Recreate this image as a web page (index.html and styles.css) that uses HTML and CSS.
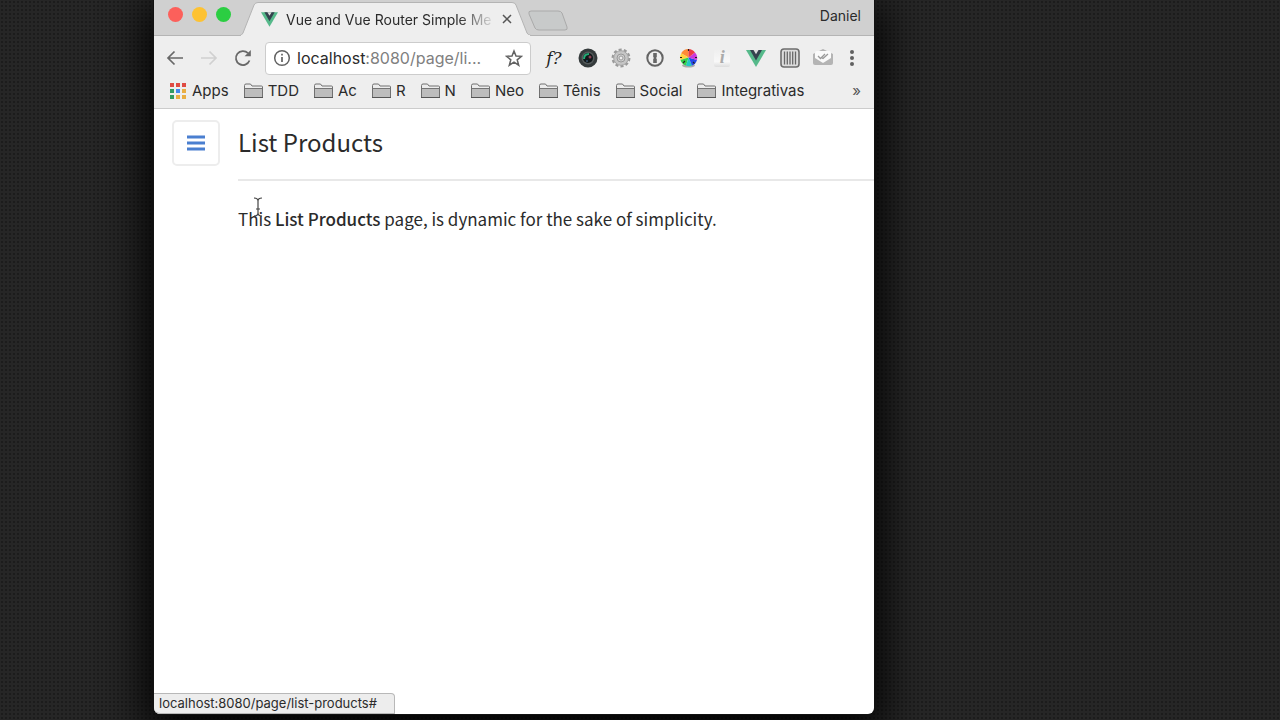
FILE: index.html
```html
<!DOCTYPE html>
<html lang="en">
<head>
<meta charset="utf-8">
<title>Vue and Vue Router Simple Menu</title>
<link rel="stylesheet" href="styles.css">
</head>
<body>
<svg class="defs" aria-hidden="true">
  <symbol id="vue" viewBox="0 0 20 17"><path d="M0 0h20L10 17z" fill="#55b98a"/><path d="M4 0h12l-6 10.500z" fill="#35424e"/><path d="M7.500 0h5L10 4.200z" fill="#dedede"/></symbol>
  <symbol id="folder" viewBox="0 0 19 16"><path d="M.5 14.500V2.500Q.5 1 2 1h4.500L8 3h9.500q1 0 1 1v10.500z" fill="#ececec" stroke="#707070"/><path d="M1 6h17v8.500H1z" fill="#bdbdbd"/><path d="M.5 5.500h18" stroke="#757575"/><path d="M0 14.500h19" stroke="#555"/></symbol>
</svg>
<div class="window">
  <header class="tabstrip">
    <div class="lights">
      <button class="light red" aria-label="Close"></button>
      <button class="light yellow" aria-label="Minimize"></button>
      <button class="light green" aria-label="Zoom"></button>
    </div>
    <div class="tab">
      <svg class="tab-shape" viewBox="0 0 291 34" preserveAspectRatio="none" aria-hidden="true"><path d="M0 33.500Q2 33 3 31L14 3Q15 .5 18 .5H272Q275 .5 276 3L287 31Q288 33 291 33.500V34H0z" fill="#eeeeee" stroke="#b4b4b4"/><path d="M1 33.500h289" stroke="#eee"/></svg>
      <svg class="favicon"><use href="#vue"/></svg>
      <span class="tab-title">Vue and Vue Router Simple Me</span>
      <button class="tab-close" aria-label="Close tab"><svg width="10" height="10" viewBox="0 0 10 10"><path d="M1 1l8 8M9 1L1 9" stroke="#555" stroke-width="1.500"/></svg></button>
    </div>
    <button class="new-tab" aria-label="New tab"><svg width="40" height="21" viewBox="0 0 40 21"><path d="M3 1h27q3 0 4 2l5 14q1 3-2 3H11q-3 0-4-2L1 4Q0 1 3 1z" fill="#c8caca" stroke="#aaa"/></svg></button>
    <span class="user">Daniel</span>
  </header>
  <div class="toolbar">
    <button class="nav" aria-label="Back"><svg width="18" height="16" viewBox="0 0 18 16"><path d="M17 8H2M8.500 1.500L2 8l6.500 6.500" fill="none" stroke="#686868" stroke-width="1.700"/></svg></button>
    <button class="nav" aria-label="Forward"><svg width="18" height="16" viewBox="0 0 18 16"><path d="M1 8h15M9.500 1.500L16 8l-6.500 6.500" fill="none" stroke="#d0d0d0" stroke-width="1.700"/></svg></button>
    <button class="nav" aria-label="Reload"><svg width="18" height="18" viewBox="0 0 18 18"><path d="M15.500 11.500A7 7 0 1 1 14 4.200" fill="none" stroke="#686868" stroke-width="1.800"/><path d="M16.800 1v6.200h-6.200z" fill="#686868"/></svg></button>
    <div class="address">
      <svg width="18" height="18" viewBox="0 0 18 18"><circle cx="9" cy="9" r="7.300" fill="none" stroke="#626262" stroke-width="1.500"/><path d="M9 8v5M9 4.800v1.700" stroke="#626262" stroke-width="1.700"/></svg>
      <span class="url">localhost<span class="path">:8080/page/li...</span></span>
      <button class="star" aria-label="Bookmark"><svg width="18" height="18" viewBox="0 0 18 18"><path d="M9 2l2 5 5.500.3-4.300 3.500 1.500 5.400L9 13.200l-4.700 3 1.500-5.400L1.500 7.300 7 7z" fill="none" stroke="#626262" stroke-width="1.500"/></svg></button>
    </div>
    <div class="extensions">
      <button class="ext script">f?</button>
      <button class="ext" aria-label="Camera"><svg width="20" height="20" viewBox="0 0 20 20"><circle cx="10" cy="10" r="9.500" fill="#343a3b"/><circle cx="10" cy="10" r="6.500" fill="#555b5c"/><circle cx="10" cy="10" r="5" fill="#101719"/><path d="M6 11q0-5 5-5" fill="none" stroke="#24aa75" stroke-width="2"/><circle cx="12" cy="9" r="1.500" fill="#8b4053"/><circle cx="9" cy="13" r="1" fill="#37536d"/></svg></button>
      <button class="ext" aria-label="Settings"><svg width="20" height="20" viewBox="0 0 20 20"><circle cx="10" cy="10" r="8.200" fill="none" stroke="#9a9a9a" stroke-width="2.500" stroke-dasharray="3 2.150"/><circle cx="10" cy="10" r="7.300" fill="#c6c6c6" stroke="#a5a5a5"/><circle cx="10" cy="10" r="4" fill="#d0d0d0" stroke="#999"/><circle cx="10" cy="10" r="2" fill="#eee" stroke="#999"/></svg></button>
      <button class="ext" aria-label="Passwords"><svg width="18" height="18" viewBox="0 0 18 18"><circle cx="9" cy="9" r="7.700" fill="#eee" stroke="#646464" stroke-width="2"/><path d="M7.200 4h3.600v4l-.8 1 .8 1v4H7.200v-4L8 9l-.8-1z" fill="#666"/></svg></button>
      <button class="ext" aria-label="Colors"><svg width="19" height="20" viewBox="0 0 19 20"><ellipse cx="9.500" cy="17.500" rx="6.500" ry="2" fill="#aaa"/><path d="M9.500 9.500V1a8.500 8.500 0 0 0-7.400 4.300z" fill="#ff8b36"/><path d="M9.500 9.500L2.100 5.300A8.500 8.500 0 0 0 1.500 12z" fill="#ffd43c"/><path d="M9.500 9.500L1.500 12A8.500 8.500 0 0 0 7 17.600z" fill="#33d24d"/><path d="M9.500 9.500L7 17.600a8.500 8.500 0 0 0 6 0z" fill="#23c9c2"/><path d="M9.500 9.500L13 17.600a8.500 8.500 0 0 0 5-5.600z" fill="#2548e8"/><path d="M9.500 9.500L18 12a8.500 8.500 0 0 0-2-7.500z" fill="#cd36dc"/><path d="M9.500 9.500L16 4.500A8.500 8.500 0 0 0 9.500 1z" fill="#ee3b44"/><path d="M9.500 1v2M1 9.500h2M16 9.500h2M4 15l2-2M14 14l1.500 1.500" stroke="#222" stroke-width="1.200"/></svg></button>
      <button class="ext"><span class="info">i</span></button>
      <button class="ext" aria-label="Vue devtools"><svg class="vue-ext"><use href="#vue"/></svg></button>
      <button class="ext" aria-label="Barcode"><svg width="20" height="20" viewBox="0 0 20 20"><rect x="1" y="1" width="18" height="18" rx="3" fill="#ddd" stroke="#6e6e6e" stroke-width="1.600"/><path d="M4.500 3.500v13M7.300 3.500v13M10 3.500v13M12.700 3.500v13M15.500 3.500v13" stroke="#686868" stroke-width="1.300"/></svg></button>
      <button class="ext" aria-label="Mail"><svg width="20" height="18" viewBox="0 0 20 18"><path d="M0 5l10-5 10 5v9q0 2-2 2H2q-2 0-2-2z" fill="#b4b4b4"/><path d="M2 4q0-2 2-2h12q2 0 2 2v5l-8 5-8-5z" fill="#fafafa"/><path d="M5 7l2.500 2.500L12 5M9 9l1 .5L15 5" fill="none" stroke="#999" stroke-width="1.300"/></svg></button>
    </div>
    <button class="menu" aria-label="Browser menu"><svg width="4" height="18" viewBox="0 0 4 18"><g fill="#606060"><circle cx="2" cy="3" r="2"/><circle cx="2" cy="9" r="2"/><circle cx="2" cy="15" r="2"/></g></svg></button>
  </div>
  <nav class="bookmarks">
    <a href="#"><svg width="18" height="18" viewBox="0 0 18 18"><path d="M1 1h4v4H1zM7 1h4v4H7zM13 1h4v4h-4z" fill="#df4b43"/><path d="M1 7h4v4H1zM1 13h4v4H1z" fill="#329b63"/><path d="M7 7h4v4H7z" fill="#4389ee"/><path d="M13 7h4v4h-4zM7 13h4v4H7zM13 13h4v4h-4z" fill="#e9ae43"/></svg>Apps</a>
    <a href="#"><svg class="folder"><use href="#folder"/></svg>TDD</a>
    <a href="#"><svg class="folder"><use href="#folder"/></svg>Ac</a>
    <a href="#"><svg class="folder"><use href="#folder"/></svg>R</a>
    <a href="#"><svg class="folder"><use href="#folder"/></svg>N</a>
    <a href="#"><svg class="folder"><use href="#folder"/></svg>Neo</a>
    <a href="#"><svg class="folder"><use href="#folder"/></svg>Tênis</a>
    <a href="#"><svg class="folder"><use href="#folder"/></svg>Social</a>
    <a href="#"><svg class="folder"><use href="#folder"/></svg>Integrativas</a>
    <button class="more" aria-label="More bookmarks">»</button>
  </nav>
  <main class="page">
    <button class="hamburger" aria-label="Toggle menu"><svg width="18" height="16" viewBox="0 0 18 16"><path d="M0 2h18M0 8h18M0 14h18" stroke="#4a7fd0" stroke-width="3"/></svg></button>
    <article class="content">
      <h1>List Products</h1>
      <p>This <strong>List Products</strong> page, is dynamic for the sake of simplicity.</p>
      <svg class="cursor" width="10" height="20" viewBox="0 0 10 20" aria-hidden="true"><path d="M1 1q4 0 4 3 0-3 4-3M5 4v12M1 19q4 0 4-3 0 3 4 3M3 12h4" fill="none" stroke="#444" stroke-width="1.200"/></svg>
    </article>
  </main>
  <div class="status">localhost:8080/page/list-products#</div>
</div>
</body>
</html>
```
FILE: styles.css
```css
* { box-sizing: border-box; }
body {
  margin: 0;
  min-height: 100vh;
  display: flex;
  padding: 0 406px 6px 154px;
  overflow-x: hidden;
  background: radial-gradient(circle, #1c1c1c 1px, transparent 1px) 0 0 / 4px 4px, #262626;
  font-family: Inter, "Liberation Sans", sans-serif;
  font-size: 14px;
  color: #2b2b2b;
}
button { padding: 0; border: 0; background: none; font: inherit; color: inherit; }
svg { display: block; flex: none; }
.defs { position: absolute; width: 0; height: 0; }
.window {
  position: relative;
  flex: 1;
  min-width: 0;
  display: flex;
  flex-direction: column;
  background: #fff;
  border-radius: 0 0 6px 6px;
  box-shadow: 0 0 0 1px #111, 0 12px 44px 8px #000;
}
.tabstrip {
  display: flex;
  align-items: flex-start;
  height: 36px;
  padding-right: 13px;
  background: #d0d0d0;
  border-bottom: 1px solid #b4b4b4;
}
.lights { display: flex; gap: 9px; padding: 7px 0 0 14px; }
.light { width: 15px; height: 15px; border-radius: 50%; }
.red { background: #fc605b; }
.yellow { background: #fdc233; }
.green { background: #2bce42; }
.tab {
  position: relative;
  display: flex;
  align-items: center;
  width: 291px;
  height: 34px;
  margin: 2px 0 0 9px;
  padding: 0 19px 0 21px;
}
.tab-shape { position: absolute; inset: 0; width: 100%; height: 100%; }
.favicon { position: relative; width: 17px; height: 15px; }
.tab-title {
  position: relative;
  flex: 1;
  margin: 0 6px 0 8px;
  white-space: nowrap;
  mask-image: linear-gradient(90deg, #000 82%, transparent);
}
.tab-close { position: relative; }
.new-tab { margin: 10px 0 0 -3px; }
.user { margin-left: auto; padding-top: 7px; line-height: 17px; }
.toolbar {
  display: flex;
  align-items: center;
  height: 44px;
  padding: 0 12px 0 4px;
  background: #eee;
}
.nav { width: 34px; height: 34px; display: grid; place-items: center; }
.address {
  flex: 1;
  min-width: 0;
  height: 33px;
  display: flex;
  align-items: center;
  gap: 6px;
  margin: 0 6px 0 5px;
  padding: 0 7px;
  background: #fff;
  border: 1px solid #ccc;
  border-radius: 4px;
}
.url { flex: 1; font-size: 16px; white-space: nowrap; }
.path { color: #808080; }
.extensions { display: flex; width: 303px; }
.ext { flex: 1; height: 24px; display: grid; place-items: center; }
.script { font: italic 17px "DejaVu Serif", serif; color: #222; }
.info {
  width: 16px;
  height: 18px;
  font: italic bold 18px/16px "Liberation Serif", serif;
  color: #aaa;
  background: linear-gradient(#eee, #f8f8f8 70%, #ddd);
  border-radius: 2px;
}
.vue-ext { width: 20px; height: 17px; }
.menu { width: 20px; height: 24px; margin-left: 2px; display: grid; place-items: center; }
.bookmarks {
  display: flex;
  align-items: center;
  gap: 15px;
  height: 29px;
  padding: 0 13px 7px 15px;
  background: #eee;
  border-bottom: 1px solid #ccc;
  font-size: 15px;
}
.bookmarks a { display: flex; align-items: center; gap: 5px; color: inherit; text-decoration: none; white-space: nowrap; }
.folder { width: 19px; height: 16px; }
.more { margin-left: auto; color: #555; }
.page {
  flex: 1;
  display: flex;
  align-items: flex-start;
  gap: 18px;
  padding: 11px 0 0 18px;
  font-family: "Noto Sans CJK SC", sans-serif;
}
.hamburger {
  width: 48px;
  height: 46px;
  display: grid;
  place-items: center;
  border: 2px solid #ededed;
  border-radius: 5px;
}
.content { position: relative; flex: 1; }
h1 { margin: 0; padding: 2px 0 17px; font-size: 24px; line-height: 40px; font-weight: 400; border-bottom: 2px solid #e8e8e8; }
p { margin: 24px 0; font-size: 17px; line-height: 28px; }
strong { font-weight: 500; }
.cursor { position: absolute; left: 15px; top: 77px; }
.status {
  position: absolute;
  left: 0;
  bottom: 0;
  padding: 1px 17px 1px 5px;
  font-size: 13px;
  line-height: 17px;
  background: #ededed;
  border: 1px solid #b8b8b8;
  border-left: 0;
  border-radius: 0 4px 0 6px;
}
```
